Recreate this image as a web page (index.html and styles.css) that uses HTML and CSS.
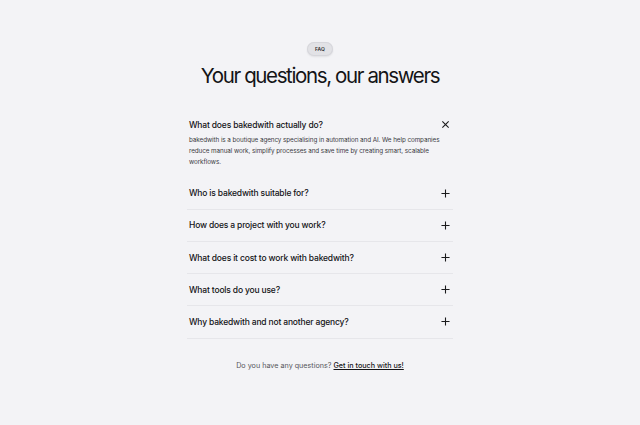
FILE: index.html
```html
<!DOCTYPE html>
<html lang="en">
<head>
    <meta charset="UTF-8">
    <meta name="viewport" content="width=device-width, initial-scale=1.0">
    <title>FAQ</title>
    <link rel="stylesheet" href="styles.css">
</head>
<body>
    <section class="faq">
        <div class="badge">FAQ</div>
        <h1 class="title">Your questions, our answers</h1>

        <div class="list">
            <div class="item open">
                <div class="question">
                    <span>What does bakedwith actually do?</span>
                    <svg class="icon" viewBox="0 0 10 10"><path d="M1.5 1.5 L8.5 8.5 M8.5 1.5 L1.5 8.5"/></svg>
                </div>
                <p class="answer">bakedwith is a boutique agency specialising in automation and AI. We help companies reduce manual work, simplify processes and save time by creating smart, scalable workflows.</p>
            </div>
            <div class="item">
                <div class="question">
                    <span>Who is bakedwith suitable for?</span>
                    <svg class="icon" viewBox="0 0 10 10"><path d="M5 0.5 V9.5 M0.5 5 H9.5"/></svg>
                </div>
            </div>
            <div class="item">
                <div class="question">
                    <span>How does a project with you work?</span>
                    <svg class="icon" viewBox="0 0 10 10"><path d="M5 0.5 V9.5 M0.5 5 H9.5"/></svg>
                </div>
            </div>
            <div class="item">
                <div class="question">
                    <span>What does it cost to work with bakedwith?</span>
                    <svg class="icon" viewBox="0 0 10 10"><path d="M5 0.5 V9.5 M0.5 5 H9.5"/></svg>
                </div>
            </div>
            <div class="item">
                <div class="question">
                    <span>What tools do you use?</span>
                    <svg class="icon" viewBox="0 0 10 10"><path d="M5 0.5 V9.5 M0.5 5 H9.5"/></svg>
                </div>
            </div>
            <div class="item">
                <div class="question">
                    <span>Why bakedwith and not another agency?</span>
                    <svg class="icon" viewBox="0 0 10 10"><path d="M5 0.5 V9.5 M0.5 5 H9.5"/></svg>
                </div>
            </div>
        </div>

        <p class="footer">Do you have any questions? <a href="#">Get in touch with us!</a></p>
    </section>
</body>
</html>
```
FILE: styles.css
```css
body {
    margin: 0;
    background: #f3f3f6;
    color: #141416;
    font-family: Inter, "Noto Sans", sans-serif;
}
.faq {
    display: flex;
    flex-direction: column;
    align-items: center;
    padding-top: 42px;
}
.badge {
    height: 14px;
    padding: 0 8px;
    border-radius: 7px;
    background: #e2e2e6;
    box-shadow: inset 0 0 0 1px #d6d6db, 0 1px 2px rgba(0, 0, 0, 0.08);
    font-size: 5px;
    font-weight: 600;
    line-height: 14px;
    color: #333;
    letter-spacing: 0.02em;
}
.title {
    margin: 7px 0 0;
    font-size: 20.5px;
    line-height: 26px;
    font-weight: 400;
    letter-spacing: -0.067em;
}
.list {
    width: 266px;
    margin-top: 20px;
}
.item {
    border-bottom: 1px solid #e6e6ea;
}
.item.open {
    border-bottom: none;
    padding-bottom: 10.5px;
}
.question {
    display: flex;
    justify-content: space-between;
    align-items: center;
    padding: 8.6px 3px 8.6px 2px;
    font-size: 8.5px;
    line-height: 14px;
    font-weight: 500;
    letter-spacing: -0.02em;
}
.item.open .question {
    padding-bottom: 0;
}
.icon {
    width: 9px;
    height: 9px;
    fill: none;
    stroke: #1a1a1c;
    stroke-width: 1.2;
}
.answer {
    margin: 3.75px 0 0;
    padding: 0 4px 0 2px;
    font-size: 6.3px;
    line-height: 10.6px;
    letter-spacing: -0.01em;
    color: #3a3a3e;
}
.footer {
    margin: 21.5px 0 0;
    font-size: 7.2px;
    line-height: 12px;
    color: #55555a;
}
.footer a {
    color: #141416;
    font-weight: 500;
    text-decoration: underline;
}
```
